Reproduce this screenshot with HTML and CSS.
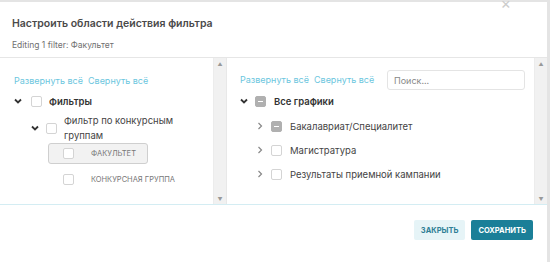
FILE: index.html
```html
<!DOCTYPE html>
<html>
<head>
<meta http-equiv="Content-Type" content="text/html; charset=utf-8"/>
<title>Настроить области действия фильтра</title>
<link rel="stylesheet" href="styles.css">
</head>
<body>
<div class="modal">
  <span class="close">&times;</span>
  <div class="modal-header">
    <div class="title">Настроить области действия фильтра</div>
    <div class="subtitle">Editing 1 filter: Факультет</div>
  </div>

  <div class="panes">
    <div class="pane pane-left">
      <div class="pane-body">
        <div class="links"><a>Развернуть всё</a><a>Свернуть всё</a></div>

        <div class="node lvl1">
          <svg class="chev" width="8" height="6" viewBox="0 0 8 6"><polyline points="1,1.5 4,4.5 7,1.5"/></svg>
          <span class="cb"></span>
          <span class="label bold">Фильтры</span>
        </div>

        <div class="node lvl2">
          <svg class="chev" width="8" height="6" viewBox="0 0 8 6"><polyline points="1,1.5 4,4.5 7,1.5"/></svg>
          <span class="cb"></span>
          <span class="label wrap">Фильтр по конкурсным группам</span>
        </div>

        <div class="node lvl3 selected">
          <span class="cb"></span>
          <span class="label caps">Факультет</span>
        </div>

        <div class="node lvl3">
          <span class="cb"></span>
          <span class="label caps">Конкурсная группа</span>
        </div>
      </div>
      <div class="scrollbar"><span>&#9650;</span><span>&#9660;</span></div>
    </div>

    <div class="pane pane-right">
      <div class="pane-body">
        <div class="toolbar">
          <div class="links"><a>Развернуть всё</a><a>Свернуть всё</a></div>
          <input class="search" type="text" placeholder="Поиск...">
        </div>

        <div class="node rlvl1">
          <svg class="chev" width="8" height="6" viewBox="0 0 8 6"><polyline points="1,1.5 4,4.5 7,1.5"/></svg>
          <span class="cb half"></span>
          <span class="label bold">Все графики</span>
        </div>

        <div class="node rlvl2">
          <svg class="chev-r" width="6" height="8" viewBox="0 0 6 8"><polyline points="1.5,1 4.5,4 1.5,7"/></svg>
          <span class="cb half"></span>
          <span class="label">Бакалавриат/Специалитет</span>
        </div>

        <div class="node rlvl2">
          <svg class="chev-r" width="6" height="8" viewBox="0 0 6 8"><polyline points="1.5,1 4.5,4 1.5,7"/></svg>
          <span class="cb"></span>
          <span class="label">Магистратура</span>
        </div>

        <div class="node rlvl2">
          <svg class="chev-r" width="6" height="8" viewBox="0 0 6 8"><polyline points="1.5,1 4.5,4 1.5,7"/></svg>
          <span class="cb"></span>
          <span class="label">Результаты приемной кампании</span>
        </div>
      </div>
      <div class="scrollbar"><span>&#9650;</span><span>&#9660;</span></div>
    </div>
  </div>

  <div class="modal-footer">
    <button class="btn btn-light">Закрыть</button>
    <button class="btn btn-primary">Сохранить</button>
  </div>
</div>
</body>
</html>
```

FILE: styles.css
```css
body {
  margin: 0;
  background-color: #e4e4e4;
  font-family: Inter, "Noto Sans", sans-serif;
  color: #333;
}

.modal {
  position: relative;
  width: 547px;
  height: 260px;
  margin-top: 2px;
  background-color: white;
  display: flex;
  flex-direction: column;
}

.close {
  position: absolute;
  right: 36px;
  top: -9px;
  font-size: 16px;
  color: #ccc;
}

.modal-header {
  height: 56px;
  padding: 0 12px;
  border-bottom: 1px solid #e6e6e6;
  box-sizing: border-box;
}

.title {
  padding-top: 15px;
  font-size: 10.5px;
  font-weight: 600;
  color: #4a4a4a;
  line-height: 14px;
}

.subtitle {
  margin-top: 9px;
  font-size: 8.5px;
  color: #707070;
  line-height: 11px;
}

.panes {
  display: flex;
  height: 146px;
  border-bottom: 1px solid #d4edf3;
}

.pane {
  display: flex;
}

.pane-left {
  width: 226px;
  border-right: 1px solid #e8e8e8;
}

.pane-right {
  flex: 1;
}

.pane-body {
  flex: 1;
  padding: 17px 0 0 14px;
}

.pane-right .pane-body {
  padding-top: 16px;
  padding-left: 13px;
  padding-right: 9px;
}

.scrollbar {
  width: 12px;
  background-color: #f1f1f1;
  display: flex;
  flex-direction: column;
  justify-content: space-between;
  align-items: center;
  padding: 3px 0 2px;
  font-size: 5px;
  color: #999;
  border-left: 1px solid #ececec;
}

.links {
  font-size: 9px;
  line-height: 12px;
  color: #6bc6de;
  white-space: nowrap;
}

.links a {
  margin-right: 5px;
}

.toolbar {
  display: flex;
  justify-content: space-between;
  align-items: flex-start;
}

.search {
  width: 138px;
  height: 20px;
  box-sizing: border-box;
  margin-top: -4px;
  border: 1px solid #e4e4e4;
  border-radius: 3px;
  padding: 0 6px;
  font-family: Inter, "Noto Sans", sans-serif;
  font-size: 9px;
  outline: none;
}

.search::placeholder {
  color: #888;
}

.node {
  display: flex;
  align-items: center;
  font-size: 9.5px;
  color: #444;
  white-space: nowrap;
}

.chev {
  fill: none;
  stroke: #333;
  stroke-width: 1.8;
  margin-right: 7px;
}

.chev-r {
  fill: none;
  stroke: #888;
  stroke-width: 1.2;
  margin-right: 8px;
}

.cb {
  width: 11px;
  height: 11px;
  box-sizing: border-box;
  border: 1px solid #d4d4d4;
  border-radius: 2px;
  background-color: white;
  flex-shrink: 0;
  margin-right: 7px;
  position: relative;
}

.cb.half {
  background-color: #b0b0b0;
  border-color: #b0b0b0;
}

.cb.half::after {
  content: "";
  position: absolute;
  left: 2px;
  top: 4px;
  width: 5px;
  height: 1.5px;
  background-color: white;
}

.bold {
  font-weight: 600;
  color: #333;
}

.lvl1 {
  height: 22px;
  margin-top: 3px;
}

.lvl1 .chev {
  margin-right: 9px;
}

.lvl2 {
  margin-top: 1px;
  padding-left: 17px;
  height: 30px;
}

.lvl2 .label {
  width: 112px;
  line-height: 15px;
  white-space: normal;
}

.lvl3 {
  margin-left: 34px;
  width: 100px;
  height: 21px;
  box-sizing: border-box;
  padding-left: 14px;
  border: 1px solid transparent;
  margin-top: 0;
}

.lvl3 .cb {
  margin-right: 17px;
}

.lvl3.selected {
  background-color: #f2f2f2;
  border-color: #cfcfcf;
  border-radius: 3px;
}

.lvl3 + .lvl3 {
  margin-top: 5px;
}

.caps {
  text-transform: uppercase;
  font-size: 7.5px;
  color: #777;
}

.rlvl1 {
  height: 26px;
  margin-top: -2px;
}

.rlvl2 {
  height: 24px;
  padding-left: 17px;
}

.rlvl1 .cb, .rlvl2 .cb {
  margin-right: 8px;
}

.modal-footer {
  flex: 1;
  display: flex;
  justify-content: flex-end;
  align-items: flex-start;
  padding: 15px 14px 0 0;
}

.btn {
  height: 20px;
  border: none;
  border-radius: 2px;
  font-family: Inter, "Noto Sans", sans-serif;
  font-size: 7.5px;
  font-weight: 700;
  text-transform: uppercase;
  padding: 0 7px;
  margin-left: 6px;
}

.btn-light {
  background-color: #e6f4f7;
  color: #2f7f96;
}

.btn-primary {
  background-color: #1b7f98;
  color: white;
}
```
